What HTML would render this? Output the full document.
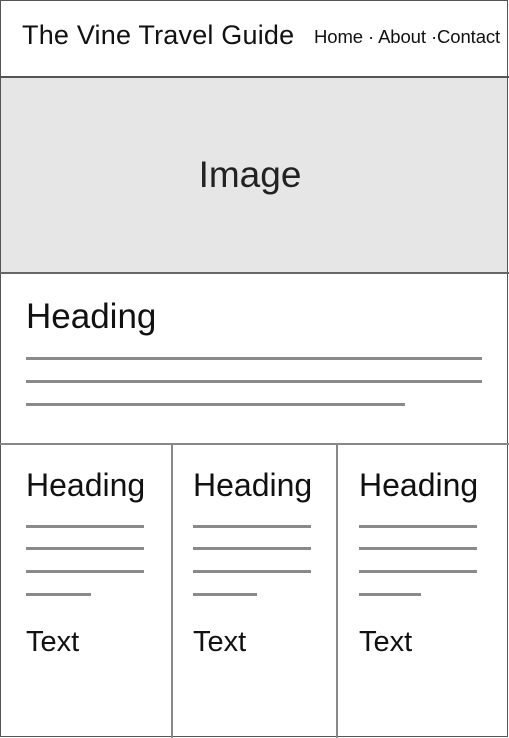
<!DOCTYPE html>
<html><head><meta charset="utf-8"><style>
body{margin:0;width:509px;height:738px;background:#fff;position:relative;overflow:hidden;font-family:"Liberation Sans",sans-serif;color:#111}
.a{position:absolute}
.l{position:absolute;height:3px;background:#8a8a8a}
.t{position:absolute;white-space:nowrap;line-height:1}
</style></head><body>
<div class="a" style="left:0;top:0;width:506px;height:735px;border:1.5px solid #555"></div>
<div class="a" style="left:1px;top:78px;width:506px;height:194px;background:#e6e6e6"></div>
<div class="a" style="left:0;top:76px;width:509px;height:2px;background:#555"></div>
<div class="a" style="left:0;top:272px;width:509px;height:2px;background:#666"></div>
<div class="a" style="left:0;top:443px;width:509px;height:2px;background:#888"></div>
<div class="a" style="left:171px;top:444px;width:2px;height:294px;background:#888"></div>
<div class="a" style="left:336px;top:444px;width:2px;height:294px;background:#888"></div>
<div class="t" style="left:22px;top:22px;font-size:27px;letter-spacing:0.2px">The Vine Travel Guide</div>
<div class="t" style="left:314px;top:28px;font-size:18.5px;letter-spacing:-0.1px">Home · About ·Contact</div>
<div class="t" style="left:0;width:500px;text-align:center;top:156px;font-size:37px;color:#222">Image</div>
<div class="t" style="left:26px;top:299px;font-size:35px">Heading</div>
<div class="l" style="left:26px;top:357px;width:456px"></div>
<div class="l" style="left:26px;top:380px;width:456px"></div>
<div class="l" style="left:26px;top:403px;width:379px"></div>
<div class="t" style="left:26px;top:469px;font-size:32px">Heading</div>
<div class="t" style="left:193px;top:469px;font-size:32px">Heading</div>
<div class="t" style="left:359px;top:469px;font-size:32px">Heading</div>
<div class="l" style="left:26px;top:525px;width:118px"></div>
<div class="l" style="left:26px;top:547px;width:118px"></div>
<div class="l" style="left:26px;top:570px;width:118px"></div>
<div class="l" style="left:26px;top:593px;width:65px"></div>
<div class="l" style="left:193px;top:525px;width:118px"></div>
<div class="l" style="left:193px;top:547px;width:118px"></div>
<div class="l" style="left:193px;top:570px;width:118px"></div>
<div class="l" style="left:193px;top:593px;width:64px"></div>
<div class="l" style="left:359px;top:525px;width:118px"></div>
<div class="l" style="left:359px;top:547px;width:118px"></div>
<div class="l" style="left:359px;top:570px;width:118px"></div>
<div class="l" style="left:359px;top:593px;width:62px"></div>
<div class="t" style="left:26px;top:628px;font-size:29px">Text</div>
<div class="t" style="left:193px;top:628px;font-size:29px">Text</div>
<div class="t" style="left:359px;top:628px;font-size:29px">Text</div>
</body></html>
